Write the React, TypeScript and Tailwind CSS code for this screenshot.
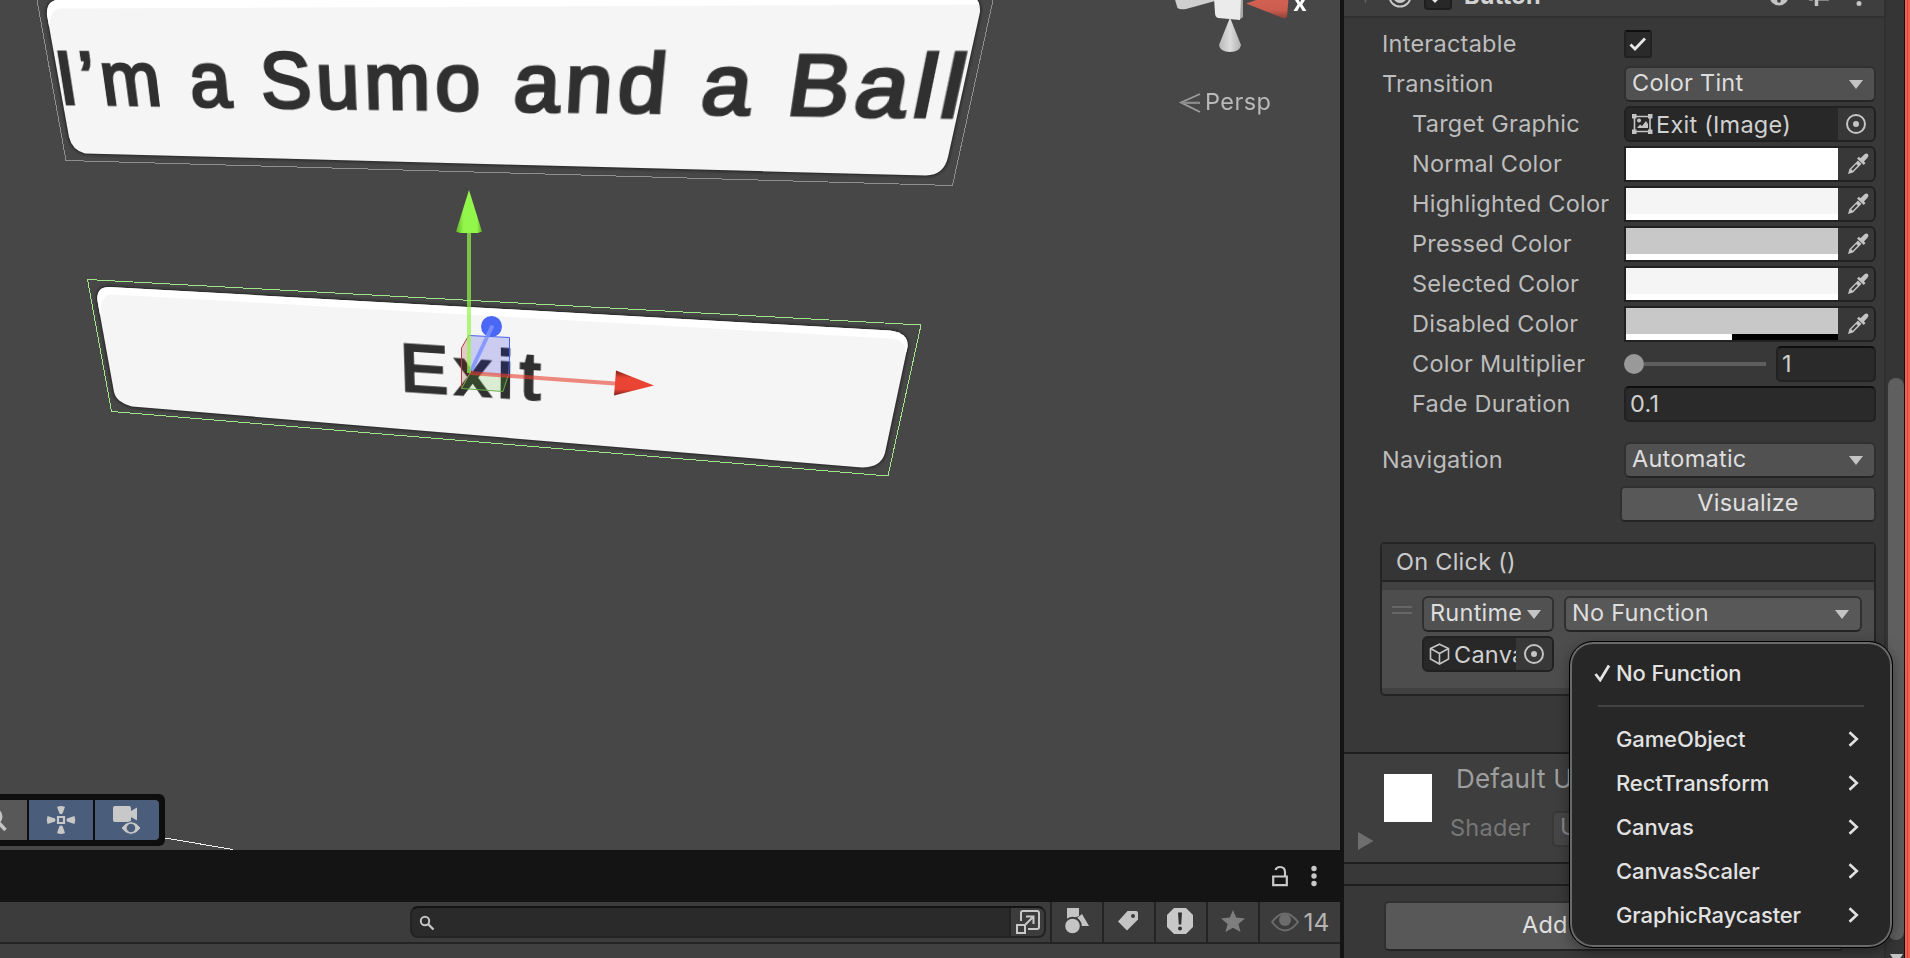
import React from "react";

type Pt = [number, number];

/** Solves the projective transform that maps four source points onto four target points. */
function projection(src: Pt[], dst: Pt[]): string {
  const m: number[][] = [];
  for (let i = 0; i < 4; i++) {
    const [x, y] = src[i];
    const [u, v] = dst[i];
    m.push([x, y, 1, 0, 0, 0, -u * x, -u * y, u]);
    m.push([0, 0, 0, x, y, 1, -v * x, -v * y, v]);
  }
  for (let c = 0; c < 8; c++) {
    let p = c;
    for (let r = c + 1; r < 8; r++) if (Math.abs(m[r][c]) > Math.abs(m[p][c])) p = r;
    [m[c], m[p]] = [m[p], m[c]];
    for (let r = 0; r < 8; r++) {
      if (r === c) continue;
      const f = m[r][c] / m[c][c];
      for (let k = c; k < 9; k++) m[r][k] -= f * m[c][k];
    }
  }
  const h = m.map((row, i) => row[8] / row[i]);
  return `matrix3d(${[h[0], h[3], 0, h[6], h[1], h[4], 0, h[7], 0, 0, 1, 0, h[2], h[5], 0, 1].join(",")})`;
}

const sumoText = projection(
  [[6, 11.5], [879, 11.5], [879, 69], [6, 69]],
  [[57.5, 51.5], [967, 55.5], [953, 119.5], [66.2, 105.8]],
);
const exitText = projection(
  [[4.5, 10], [136.5, 10], [136.5, 61], [4.5, 61]],
  [[404, 344.5], [541, 353.5], [540, 401.5], [405.5, 392.5]],
);

function SceneView() {
  return (
    <div className="relative h-[850px] overflow-hidden bg-[#474747]">
      <svg className="absolute inset-0" width="1340" height="850" viewBox="0 0 1340 850">
        <defs>
          <filter id="soft" x="-5%" y="-20%" width="110%" height="140%">
            <feGaussianBlur stdDeviation="1.6" />
          </filter>
          <filter id="edge" x="-5%" y="-20%" width="110%" height="140%">
            <feGaussianBlur stdDeviation="0.7" />
          </filter>
          <clipPath id="c1">
            <path d="M47 15Q46 0 60 -0.5L962 -6Q981 -6 980 12L948 157Q944 175 926 175.5L85 153.5Q72 150 69 137Z" />
          </clipPath>
          <clipPath id="c2">
            <path d="M97.5 301Q96 287 109 287L890 330.5Q909 333 907.5 347L885 453Q881 467.5 862 467.5L132 406.5Q116 402 114 392Z" />
          </clipPath>
          <linearGradient id="gc"><stop offset="0" stopColor="#62b32d" /><stop offset=".3" stopColor="#93f74b" /><stop offset=".8" stopColor="#93f74b" /><stop offset="1" stopColor="#5fae2c" /></linearGradient>
          <linearGradient id="rc" x1="0" y1="0" x2="0" y2="1"><stop offset="0" stopColor="#7c2018" /><stop offset=".3" stopColor="#ea4434" /><stop offset=".75" stopColor="#ea4434" /><stop offset="1" stopColor="#7c2018" /></linearGradient>
          <linearGradient id="wc"><stop offset="0" stopColor="#b8b8b8" /><stop offset=".5" stopColor="#dcdcdc" /><stop offset="1" stopColor="#b0b0b0" /></linearGradient>
          <linearGradient id="xc" x1="0" y1="0" x2="0" y2="1"><stop offset="0" stopColor="#d26152" /><stop offset=".6" stopColor="#cb5c4e" /><stop offset="1" stopColor="#8e4238" /></linearGradient>
        </defs>

        <path d="M37 0L66 160.500L952.500 185.500L993 0" fill="none" stroke="#8f8f8f" strokeWidth="1" shapeRendering="crispEdges" />
        <path d="M47 15Q46 0 60 -0.5L962 -6Q981 -6 980 12L948 157Q944 175 926 175.5L85 153.5Q72 150 69 137Z" fill="#1c1c1c" stroke="#1c1c1c" strokeWidth="1.500" filter="url(#soft)" />
        <g filter="url(#edge)">
          <g clipPath="url(#c1)">
            <rect x="40" y="-10" width="950" height="200" fill="#f5f5f5" />
            <path d="M40 -10H990V4.500L60 8.500Q50 9 50 26L40 40Z" fill="#fff" />
          </g>
        </g>

        <path d="M97.500 301Q96 287 109 287L890 330.500Q909 333 907.500 347L885 453Q881 467.500 862 467.500L132 406.500Q116 402 114 392Z" fill="#1c1c1c" stroke="#1c1c1c" strokeWidth="1.500" filter="url(#soft)" />
        <g filter="url(#edge)">
          <g clipPath="url(#c2)">
            <rect x="80" y="270" width="850" height="210" fill="#f5f5f5" />
            <path d="M90 270H920V350L905 352Q906 339 890 338.500L112 294.500Q100 294 101 315L90 320Z" fill="#fff" />
          </g>
        </g>
        <path d="M87.500 279.500L921 325L888 476L111.500 411.500Z" fill="none" stroke="#a2e48c" strokeWidth="1" shapeRendering="crispEdges" />
        <path d="M165 838L233 849.500" stroke="#f0f0f0" strokeWidth="1" shapeRendering="crispEdges" />

        <path d="M1174.500 -2L1177.500 8Q1180 10 1186 9L1215 1V-2Z" fill="#cfcfcf" />
        <path d="M1236 -2H1243V17L1239 20Z" fill="#a8a8a8" />
        <path d="M1214 -2H1241L1240 20Q1230 19 1218 18Q1215 17 1215 13Z" fill="#ebebeb" />
        <path d="M1246 3.500L1262 -2H1288.500L1287 17L1284 18.500Z" fill="url(#xc)" />
        <path d="M1230 17.500L1219 45Q1220 52 1230 52Q1240 52 1241 45Z" fill="url(#wc)" />
        <path d="M1200 94L1181 102.500L1200 112" fill="none" stroke="#9c9c9c" strokeWidth="1.800" />
        <path d="M1181 102.800H1200" stroke="#8d8d8d" strokeWidth="2.200" />
      </svg>

      <div
        className="absolute left-0 top-0 origin-top-left whitespace-pre font-['Liberation_Sans',sans-serif] text-[80px] leading-none tracking-[5px] text-[#303030] [-webkit-text-stroke:3.2px_#303030]"
        style={{ transform: sumoText }}
      >
        I’m a Sumo and a Ball
      </div>
      <div
        className="absolute left-0 top-0 origin-top-left whitespace-pre font-['Liberation_Sans',sans-serif] text-[70px] leading-none tracking-[6.5px] text-[#303030] [-webkit-text-stroke:3px_#303030]"
        style={{ transform: exitText }}
      >
        Exit
      </div>

      <svg className="absolute inset-0" width="1340" height="850" viewBox="0 0 1340 850">
        <path d="M469 335L461 349V388.500L470 373Z" fill="#a01e14" fillOpacity=".2" />
        <path d="M469 335L465.500 341L461.500 348V388.500L470 373" fill="none" stroke="#b0403c" />
        <path d="M469 335.500L509.500 337.500V358L508 376L470 373Z" fill="#1414dc" fillOpacity=".18" />
        <path d="M469 335.500L509.500 337.500V358L508.500 376" fill="none" stroke="#4360ee" />
        <path d="M470 373L508 376L503 391.500L461.500 388.500Z" fill="#4fbf1e" fillOpacity=".16" />
        <path d="M508 376L503 391.500L461.500 388.500L470 373" fill="none" stroke="#6cae4c" />
        <circle cx="491.500" cy="326.500" r="10.500" fill="#4a68f5" />
        <path d="M492.500 325.500L471 371" stroke="#7c93ff" strokeOpacity=".85" strokeWidth="4" />
        <path d="M470 373L615 383.500" stroke="#e8402f" strokeOpacity=".6" strokeWidth="4" />
        <path d="M616 370.500L654 385.500L614 395.500Z" fill="url(#rc)" />
        <path d="M469 232V373" stroke="#93f74b" strokeOpacity=".7" strokeWidth="4" />
        <path d="M469 190L456 231.500L460 233H478L482 231.500Z" fill="url(#gc)" />
      </svg>

      <span className="absolute left-[1293px] top-[-12px] font-[Inter,sans-serif] text-[24px] font-bold leading-[30px] text-white">x</span>
      <span className="absolute left-[1205px] top-[87px] font-[Inter,sans-serif] text-[23.500px] leading-[30px] tracking-[0.4px] text-[#b9b9b9]">Persp</span>

      <div className="absolute left-0 top-[794px] flex h-[52px] w-[165px] gap-[2px] rounded-r-[6px] bg-[#0e0e0e] py-[6px] pr-[6px]">
        <div className="w-[27px] bg-[#585858]">
          <svg width="27" height="40" viewBox="0 0 27 40"><circle cx="-5.500" cy="16.500" r="6.500" fill="none" stroke="#c4c4c4" strokeWidth="3" /><path d="M-1 23L5.500 30" fill="none" stroke="#c4c4c4" strokeWidth="3.500" /></svg>
        </div>
        <div className="w-[64px] bg-[#4a5e7c]">
          <svg width="64" height="40" viewBox="0 0 64 40">
            <g fill="#c8c8c8">
              <path d="M28 7Q32 5 36 7L33.500 13.500Q32 14.500 30.500 13.500Z" />
              <path d="M28 33Q32 35 36 33L33.500 26Q32 25 30.500 26Z" />
              <path d="M18.500 16Q17 20 18.500 24L26 21.500Q27 20 26 18.500Z" />
              <path d="M45.500 16Q47 20 45.500 24L38 21.500Q37 20 38 18.500Z" />
            </g>
            <path d="M29 17h6v6h-6z" fill="none" stroke="#c8c8c8" strokeWidth="2.200" />
          </svg>
        </div>
        <div className="w-[64px] rounded-r-[4px] bg-[#4a5e7c]">
          <svg width="64" height="40" viewBox="0 0 64 40">
            <path d="M20 6H34Q36 6 36 8V11L42 7.500V20.500L36 17V20Q36 22 34 22H20Q18 22 18 20V8Q18 6 20 6Z" fill="#c8c8c8" />
            <path d="M26 28Q36 15 46 28Q36 41 26 28Z" fill="#c8c8c8" stroke="#4a5e7c" strokeWidth="1" />
            <circle cx="36" cy="28" r="4.300" fill="#4a5e7c" />
          </svg>
        </div>
      </div>
    </div>
  );
}

function ToolCell({ w, children }: { w: string; children: React.ReactNode }) {
  return <div className={`${w} flex h-[40px] shrink-0 items-center justify-center border-l-2 border-[#242424]`}>{children}</div>;
}

function BottomDock() {
  return (
    <div className="flex h-[108px] flex-col bg-[#404040]">
      <div className="flex h-[52px] items-center justify-end gap-[23px] bg-[#141414] pr-[23px]">
        <svg width="16" height="22" viewBox="0 0 16 22"><path d="M1.200 11.500H14.800V20.200H1.200Z" fill="none" stroke="#c8c8c8" strokeWidth="2.200" /><path d="M3.500 5Q4.500 2 8 2Q13 2 13 7V11" fill="none" stroke="#c8c8c8" strokeWidth="2.200" /></svg>
        <svg width="6" height="22" viewBox="0 0 6 22"><g fill="#c8c8c8"><circle cx="3" cy="3.500" r="2.700" /><circle cx="3" cy="11" r="2.700" /><circle cx="3" cy="18.500" r="2.700" /></g></svg>
      </div>
      <div className="flex h-[42px] items-start justify-end border-b-2 border-[#242424] bg-[#3c3c3c]">
        <div className="mr-[4px] mt-[4px] flex h-[32px] w-[636px] overflow-hidden rounded-[8px] border-2 border-[#232323] border-t-[#141414] bg-[#2a2a2a]">
          <svg className="ml-[7px] mt-[7px]" width="18" height="16" viewBox="0 0 18 16"><circle cx="6" cy="6" r="4.200" fill="none" stroke="#c4c4c4" strokeWidth="2" /><path d="M9 9L14.500 14.500" stroke="#c4c4c4" strokeWidth="2.400" /></svg>
          <div className="ml-auto flex w-[35px] items-center justify-center border-l-2 border-[#232323] bg-[#3c3c3c]">
            <svg width="26" height="26" viewBox="0 0 26 26" className="shrink-0"><path d="M6 12V4Q6 2 8 2H22Q24 2 24 4V18Q24 20 22 20H13" fill="none" stroke="#c8c8c8" strokeWidth="2" /><path d="M2 16H10V24H2Z" fill="none" stroke="#c8c8c8" strokeWidth="2" /><path d="M9.500 16.500L18 8M11 7.500H18.500V15" fill="none" stroke="#c8c8c8" strokeWidth="2" /></svg>
          </div>
        </div>
        <ToolCell w="w-[52px]">
          <svg className="-mt-[2px]" width="26" height="28" viewBox="0 0 26 28"><g fill="#c4c4c4"><path d="M3 1H15V9Q9 11 7 12H3Z" /><path d="M18 7L25 19H17Q17 13 13 11Z" /><circle cx="8.500" cy="19" r="8.300" stroke="#3c3c3c" strokeWidth="2" /></g></svg>
        </ToolCell>
        <ToolCell w="w-[52px]">
          <svg className="-ml-[2px] -mt-[2px]" width="22" height="22" viewBox="0 0 22 22"><path d="M10.500 1H19Q21 1 21 3V9.500L10 20.500L1 11.500Z" fill="#c4c4c4" /><circle cx="16" cy="6" r="2" fill="#3c3c3c" /></svg>
        </ToolCell>
        <ToolCell w="w-[52px]">
          <svg className="-ml-[2px] -mt-[2px]" width="26" height="26" viewBox="0 0 26 26"><path d="M7 0H19L26 7V19L19 26H7L0 19V7Z" fill="#c8c8c8" /><path d="M11 4.500H15L14.200 16.500H11.800Z" fill="#303030" /><circle cx="13" cy="20.500" r="2" fill="#303030" /></svg>
        </ToolCell>
        <ToolCell w="w-[52px]">
          <svg className="-mt-[2px]" width="24" height="24" viewBox="0 0 24 24"><path d="M12 1L15.200 8.600L24 9.400L17.400 15L19.600 23L12 18.700L4.400 23L6.600 15L0 9.400L8.800 8.600Z" fill="#7e7e7e" /></svg>
        </ToolCell>
        <ToolCell w="w-[82px]">
          <svg width="28" height="20" viewBox="0 0 28 20" className="mr-[5px]"><path d="M1 10Q14 -7 27 10Q14 27 1 10Z" fill="none" stroke="#6c6c6c" strokeWidth="2" /><circle cx="14" cy="8" r="6" fill="#6c6c6c" /></svg>
          <span className="font-[Inter,sans-serif] text-[24.5px] leading-[30px] text-[#b4b4b4]">14</span>
        </ToolCell>
      </div>
    </div>
  );
}

const Arrow = () => (
  <svg width="14" height="9" viewBox="0 0 14 9" className="shrink-0"><path d="M0 0H14L7 9Z" fill="#c4c4c4" /></svg>
);

const Target = () => (
  <svg width="22" height="22" viewBox="0 0 22 22" className="shrink-0"><circle cx="11" cy="11" r="9" fill="none" stroke="#c4c4c4" strokeWidth="2" /><circle cx="11" cy="11" r="3" fill="#c4c4c4" /></svg>
);

const Dropper = () => (
  <svg width="22" height="22" viewBox="0 0 22 22">
    <path d="M1 21L2.500 16L11 7.500L14.500 11L6 19.500Z" fill="#c4c4c4" />
    <path d="M5 17L10 11.700" stroke="#383838" strokeWidth="2" />
    <path d="M10 5.500L12 3.800L13.500 5.300L17.500 1.300Q19.500 0 21 1.200Q22 2.500 20.700 4.500L17 8.500L18.500 10L16.800 12Z" fill="#c4c4c4" />
  </svg>
);

const Check = () => (
  <svg width="18" height="14" viewBox="0 0 18 14"><path d="M1.500 7.500L6 12L16 1.500" fill="none" stroke="#e8e8e8" strokeWidth="2.800" /></svg>
);

function Row({ label, sub, children }: { label: string; sub?: boolean; children: React.ReactNode }) {
  return (
    <div className="flex h-[36px] items-center">
      <div className={`w-[242px] shrink-0 whitespace-nowrap text-[#bdbdbd] ${sub ? "pl-[30px]" : ""}`}>{label}</div>
      {children}
    </div>
  );
}

function Dropdown({ text, w, light }: { text: string; w: string; light?: boolean }) {
  return (
    <div className={`${w} ${light ? "bg-[#585858]" : "bg-[#515151]"} flex h-[36px] shrink-0 items-center justify-between rounded-[6px] border-2 border-[#303030] border-b-[#242424] pl-[6px] pr-[11px] text-[#dedede]`}>
      <span className="whitespace-nowrap pb-[2px]">{text}</span>
      <Arrow />
    </div>
  );
}

function ColorField({ color, half }: { color: string; half?: boolean }) {
  return (
    <div className="flex h-[36px] w-[252px] rounded-r-[6px] border-2 border-[#212121]">
      <div className={`${color} flex w-[212px] flex-col justify-end`}>
        <div className="flex h-[6px] bg-white">{half && <div className="ml-auto w-[106px] bg-black" />}</div>
      </div>
      <div className="flex flex-1 items-center justify-center pb-[1px] pl-[4px]"><Dropper /></div>
    </div>
  );
}

const fieldBox = "flex h-[36px] items-center rounded-[5px] border-2 border-[#212121] border-t-[#0f0f0f] bg-[#2a2a2a] pl-[4px] text-[#d0d0d0]";

function Inspector() {
  return (
    <div className="relative flex w-[540px] flex-col bg-[#383838] font-[Inter,sans-serif] text-[23.5px] leading-[30px] tracking-[0.25px]">
      <div className="flex h-[18px] items-end overflow-hidden border-b-2 border-[#303030] bg-[#3e3e3e]">
        <div className="flex h-[40px] w-full shrink-0 items-center pl-[17px] pr-[22px]">
          <svg width="9" height="16" viewBox="0 0 9 16"><path d="M0 0H9L4.500 16Z" fill="#606060" /></svg>
          <svg className="ml-[18px]" width="24" height="24" viewBox="0 0 24 24"><circle cx="12" cy="12" r="10.600" fill="none" stroke="#c8c8c8" strokeWidth="2" /><circle cx="12" cy="12" r="7" fill="#c8c8c8" /></svg>
          <div className="ml-[12px] flex h-[28px] w-[28px] items-center justify-center rounded-[4px] border-2 border-[#1e1e1e] bg-[#282828]"><Check /></div>
          <span className="ml-[12px] font-bold text-[#d2d2d2]">Button</span>
          <svg className="ml-auto" width="20" height="20" viewBox="0 0 20 20"><circle cx="10" cy="10" r="9.500" fill="#c4c4c4" /><circle cx="10" cy="15" r="1.800" fill="#3e3e3e" /><path d="M7 7Q7 4 10 4T13 7Q12.500 9 10 9.500V12" fill="none" stroke="#3e3e3e" strokeWidth="2" /></svg>
          <svg className="ml-[20px]" width="21" height="22" viewBox="0 0 21 22"><path d="M0 5H20M0 14H4M6 14H20" stroke="#c4c4c4" strokeWidth="3" /><path d="M14 1V9M7.500 11V21" stroke="#c4c4c4" strokeWidth="3.500" /></svg>
          <svg className="ml-[26px]" width="6" height="20" viewBox="0 0 6 20"><g fill="#c4c4c4"><circle cx="3" cy="2.500" r="2.500" /><circle cx="3" cy="10" r="2.500" /><circle cx="3" cy="17.500" r="2.500" /></g></svg>
        </div>
      </div>

      <div className="flex flex-col gap-[4px] pl-[38px] pr-[8px] pt-[8px]">
        <Row label="Interactable">
          <div className="flex h-[28px] w-[28px] items-center justify-center rounded-[3px] border-2 border-[#212121] border-t-[#0f0f0f] bg-[#2a2a2a]"><Check /></div>
        </Row>
        <Row label="Transition"><Dropdown text="Color Tint" w="w-[252px]" /></Row>
        <Row label="Target Graphic" sub>
          <div className="flex h-[36px] w-[252px] overflow-hidden rounded-[6px] border-2 border-[#212121] bg-[#282828]">
            <div className="flex w-[212px] items-center pl-[6px] text-[#d0d0d0]">
              <svg width="21" height="20" viewBox="0 0 21 20" className="mr-[3px] shrink-0"><path d="M2.500 2.500H18V17.500H2.500Z" fill="none" stroke="#c4c4c4" strokeWidth="1.600" /><g fill="#c4c4c4"><path d="M0 0H4.500V4.500H0ZM16 0H20.500V4.500H16ZM0 15.500H4.500V20H0ZM16 15.500H20.500V20H16Z" /><circle cx="7" cy="6.500" r="2" /><path d="M5 14L8 10.500L10 12L14 7L16 10V14Z" /></g></svg>
              <span className="whitespace-nowrap pt-[1px]">Exit (Image)</span>
            </div>
            <div className="flex flex-1 items-center justify-center bg-[#383838]"><Target /></div>
          </div>
        </Row>
        <Row label="Normal Color" sub><ColorField color="bg-white" /></Row>
        <Row label="Highlighted Color" sub><ColorField color="bg-[#f5f5f5]" /></Row>
        <Row label="Pressed Color" sub><ColorField color="bg-[#c8c8c8]" /></Row>
        <Row label="Selected Color" sub><ColorField color="bg-[#f5f5f5]" /></Row>
        <Row label="Disabled Color" sub><ColorField color="bg-[#c8c8c8]" half /></Row>
        <Row label="Color Multiplier" sub>
          <div className="h-[20px] w-[20px] rounded-full bg-[#999999]" />
          <div className="mr-[10px] h-[4px] w-[122px] bg-[#5e5e5e]" />
          <div className={`${fieldBox} w-[100px]`}>1</div>
        </Row>
        <Row label="Fade Duration" sub><div className={`${fieldBox} w-[252px]`}>0.1</div></Row>
        <div className="h-[12px]" />
        <Row label="Navigation"><Dropdown text="Automatic" w="w-[252px]" /></Row>
        <div className="mt-[4px] flex h-[36px] w-[256px] items-center justify-center self-end rounded-[5px] border-2 border-[#303030] border-b-[#242424] bg-[#585858] pb-[2px] text-[#e0e0e0]">Visualize</div>
      </div>

      <div className="ml-[36px] mt-[20px] flex h-[154px] w-[496px] shrink-0 flex-col rounded-[5px] border-2 border-[#242424] bg-[#414141]">
        <div className="flex h-[38px] items-center border-b-2 border-[#242424] bg-[#353535] pl-[14px] text-[#cbcbcb]">On Click ()</div>
        <div className="mt-[8px] flex h-[98px] bg-[#4d4d4d] pl-[10px] pt-[6px]">
          <div className="mt-[10px] h-[8px] w-[20px] border-y-2 border-[#666666]" />
          <div className="ml-[10px] flex flex-col gap-[4px]">
            <Dropdown text="Runtime" w="w-[132px]" />
            <div className="flex h-[36px] w-[132px] overflow-hidden rounded-[6px] border-2 border-[#212121] bg-[#282828]">
              <div className="flex w-[92px] items-center overflow-hidden pl-[5px] text-[#d0d0d0]">
                <svg width="21" height="22" viewBox="0 0 21 22" className="mr-[4px] shrink-0"><path d="M10.500 1.200L19.500 5.500V16L10.500 21L1.500 16V5.500ZM1.500 5.500L10.500 10.500L19.500 5.500M10.500 10.500V21" fill="none" stroke="#c4c4c4" strokeWidth="1.600" /></svg>
                <span className="pt-[1px]">Canvas</span>
              </div>
              <div className="flex flex-1 items-center justify-center bg-[#383838]"><Target /></div>
            </div>
          </div>
          <div className="ml-[10px]"><Dropdown text="No Function" w="w-[298px]" light /></div>
        </div>
      </div>

      <div className="mt-[56px] flex h-[112px] shrink-0 border-y-2 border-[#1e1e1e] bg-[#3e3e3e]">
        <svg className="ml-[14px] mt-[78px]" width="16" height="18" viewBox="0 0 16 18"><path d="M0 0L15.500 9L0 18Z" fill="#6e6e6e" /></svg>
        <div className="ml-[10px] mt-[20px] h-[48px] w-[48px] bg-white" />
        <div className="ml-[18px] flex flex-col">
          <span className="ml-[6px] mt-[9px] h-[32px] whitespace-nowrap text-[26px] leading-[32px] tracking-[0.2px] text-[#9e9e9e]">Default U</span>
          <div className="mt-[17px] flex h-[36px] items-center text-[#777777]">
            <span className="-mt-[4px] w-[102px]">Shader</span>
            <div className="-mt-[2px] h-[36px] w-[200px] rounded-[5px] border-2 border-[#383838] bg-[#464646] pl-[6px] leading-[28px] text-[#868686]">U</div>
          </div>
        </div>
      </div>
      <div className="h-[20px] shrink-0" />
      <div className="flex h-[72px] shrink-0 flex-col border-t-2 border-[#1e1e1e] pl-[40px] pt-[15px]">
        <div className="flex h-[50px] w-[460px] items-center rounded-[5px] border-2 border-[#303030] border-b-[#242424] bg-[#585858] pb-[2px] pl-[136px] text-[#e0e0e0]">Add</div>
      </div>
    </div>
  );
}

function ScrollBar() {
  return (
    <div className="flex w-[20px] flex-col items-end overflow-hidden border-l-2 border-[#303030] bg-[#353535]">
      <div className="mt-[378px] h-[562px] w-[16px] shrink-0 rounded-[8px] bg-[#5f5f5f]" />
      <svg className="mt-[14px] shrink-0" width="14" height="12" viewBox="0 0 14 12"><path d="M0 0H13L6.500 10Z" fill="#c4c4c4" /></svg>
    </div>
  );
}

const menuItems = ["GameObject", "RectTransform", "Canvas", "CanvasScaler", "GraphicRaycaster"];

function FunctionMenu() {
  return (
    <div className="absolute left-[1569px] top-[641px] flex h-[307px] w-[324px] flex-col rounded-[24px] border border-black bg-[#272727] font-[Inter,sans-serif] text-[22px] font-medium leading-[44px] tracking-[-0.12px] text-[#e2e2e2] shadow-[inset_0_0_0_2px_#6a6a6a,0_4px_14px_rgba(0,0,0,0.35)]">
      <div className="mt-[9px] flex h-[44px] items-center pl-[24px]">
        <svg width="17" height="18" viewBox="0 0 17 18"><path d="M1.500 10L6.200 16L15 1.500" fill="none" stroke="#e4e4e4" strokeWidth="2.800" /></svg>
        <span className="ml-[5px]">No Function</span>
      </div>
      <div className="ml-[28px] mt-[10px] h-[2px] w-[266px] bg-[#444444]" />
      <div className="mt-[10px] flex flex-col">
        {menuItems.map((t) => (
          <div key={t} className="flex h-[44px] items-center justify-between pl-[46px] pr-[33px]">
            <span>{t}</span>
            <svg width="11" height="16" viewBox="0 0 11 16"><path d="M1.500 1.200L8.800 8L1.500 14.800" fill="none" stroke="#e2e2e2" strokeWidth="2.600" /></svg>
          </div>
        ))}
      </div>
    </div>
  );
}

export default function App() {
  return (
    <div className="relative flex h-[958px] w-[1910px] overflow-hidden bg-[#383838]">
      <div className="flex w-[1340px] shrink-0 flex-col">
        <SceneView />
        <BottomDock />
      </div>
      <div className="w-[4px] shrink-0 bg-[#141414]" />
      <Inspector />
      <ScrollBar />
      <div className="flex w-[6px] shrink-0 border-l border-[#111111] bg-[#f4604f]">
        <div className="ml-[2px] w-px bg-[#d9483a]" />
      </div>
      <FunctionMenu />
    </div>
  );
}
